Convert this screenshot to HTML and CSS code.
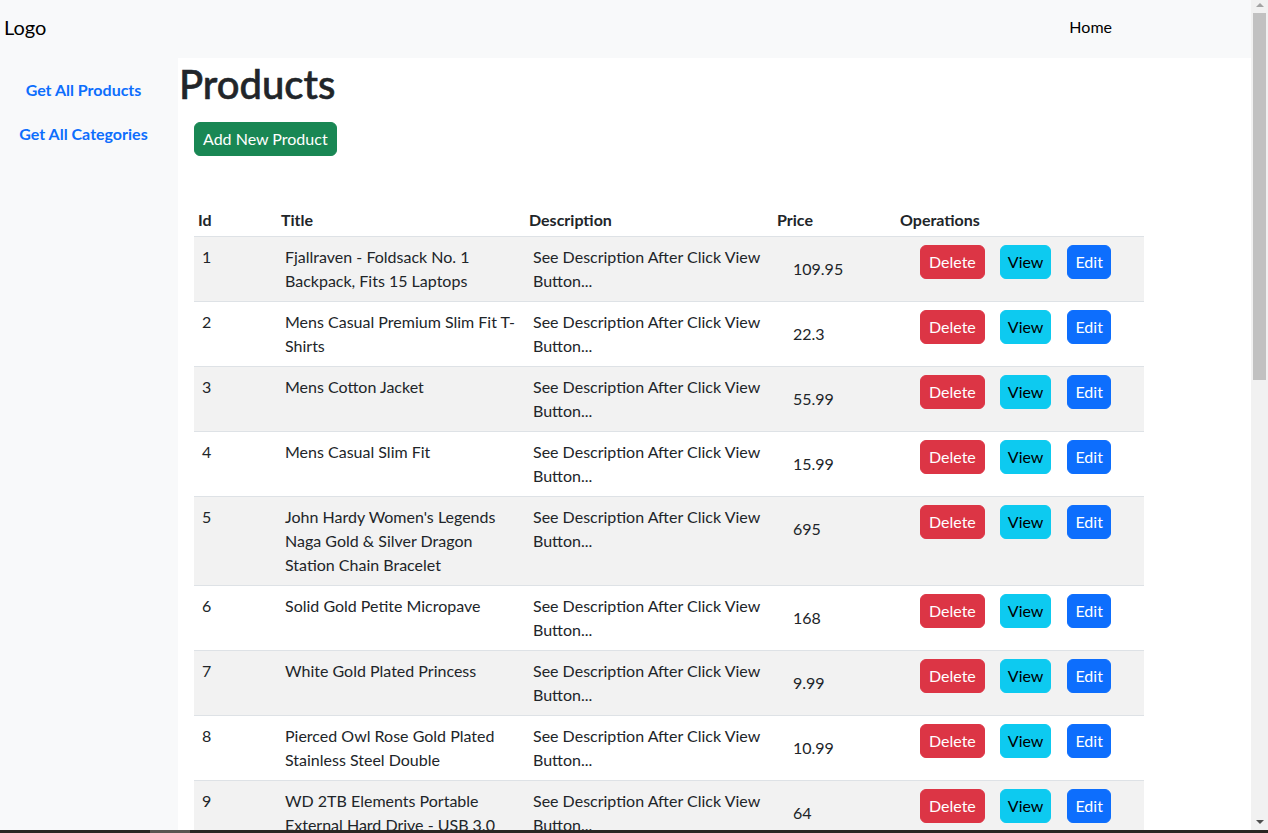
FILE: index.html
```html
<!DOCTYPE html>
<html lang="en">
<head>
<meta charset="utf-8">
<title>Products</title>
<link rel="stylesheet" href="styles.css">
</head>
<body>
<header class="navbar">
  <a class="brand" href="#">Logo</a>
  <nav class="topnav"><a href="#">Home</a></nav>
</header>
<div class="layout">
  <aside class="sidebar">
    <a href="#">Get All Products</a>
    <a href="#">Get All Categories</a>
  </aside>
  <main class="content">
    <h1 class="page-title">Products</h1>
    <div class="actions"><button class="btn btn-success">Add New Product</button></div>
    <table class="products">
      <colgroup>
        <col class="c-id"><col class="c-title"><col class="c-desc"><col class="c-price"><col class="c-ops">
      </colgroup>
      <thead>
        <tr><th>Id</th><th>Title</th><th>Description</th><th>Price</th><th>Operations</th></tr>
      </thead>
      <tbody>
        <tr><td>1</td><td>Fjallraven - Foldsack No. 1 Backpack, Fits 15 Laptops</td><td>See Description After Click View Button...</td><td class="price">109.95</td><td class="ops"><button class="btn btn-danger">Delete</button><button class="btn btn-info">View</button><button class="btn btn-primary">Edit</button></td></tr>
        <tr><td>2</td><td>Mens Casual Premium Slim Fit T-Shirts</td><td>See Description After Click View Button...</td><td class="price">22.3</td><td class="ops"><button class="btn btn-danger">Delete</button><button class="btn btn-info">View</button><button class="btn btn-primary">Edit</button></td></tr>
        <tr><td>3</td><td>Mens Cotton Jacket</td><td>See Description After Click View Button...</td><td class="price">55.99</td><td class="ops"><button class="btn btn-danger">Delete</button><button class="btn btn-info">View</button><button class="btn btn-primary">Edit</button></td></tr>
        <tr><td>4</td><td>Mens Casual Slim Fit</td><td>See Description After Click View Button...</td><td class="price">15.99</td><td class="ops"><button class="btn btn-danger">Delete</button><button class="btn btn-info">View</button><button class="btn btn-primary">Edit</button></td></tr>
        <tr><td>5</td><td>John Hardy Women's Legends Naga Gold &amp; Silver Dragon Station Chain Bracelet</td><td>See Description After Click View Button...</td><td class="price">695</td><td class="ops"><button class="btn btn-danger">Delete</button><button class="btn btn-info">View</button><button class="btn btn-primary">Edit</button></td></tr>
        <tr><td>6</td><td>Solid Gold Petite Micropave</td><td>See Description After Click View Button...</td><td class="price">168</td><td class="ops"><button class="btn btn-danger">Delete</button><button class="btn btn-info">View</button><button class="btn btn-primary">Edit</button></td></tr>
        <tr><td>7</td><td>White Gold Plated Princess</td><td>See Description After Click View Button...</td><td class="price">9.99</td><td class="ops"><button class="btn btn-danger">Delete</button><button class="btn btn-info">View</button><button class="btn btn-primary">Edit</button></td></tr>
        <tr><td>8</td><td>Pierced Owl Rose Gold Plated Stainless Steel Double</td><td>See Description After Click View Button...</td><td class="price">10.99</td><td class="ops"><button class="btn btn-danger">Delete</button><button class="btn btn-info">View</button><button class="btn btn-primary">Edit</button></td></tr>
        <tr><td>9</td><td>WD 2TB Elements Portable External Hard Drive - USB 3.0</td><td>See Description After Click View Button...</td><td class="price">64</td><td class="ops"><button class="btn btn-danger">Delete</button><button class="btn btn-info">View</button><button class="btn btn-primary">Edit</button></td></tr>
        <tr><td>10</td><td>SanDisk SSD PLUS 1TB Internal SSD - SATA III 6 Gb/s</td><td>See Description After Click View Button...</td><td class="price">109</td><td class="ops"><button class="btn btn-danger">Delete</button><button class="btn btn-info">View</button><button class="btn btn-primary">Edit</button></td></tr>
      </tbody>
    </table>
  </main>
</div>
<div class="scrollbar" aria-hidden="true">
  <span class="sb-arrow sb-up"></span>
  <span class="sb-thumb"></span>
  <span class="sb-arrow sb-down"></span>
</div>
<div class="taskbar" aria-hidden="true"><span class="tb-seg"></span></div>
</body>
</html>
```
FILE: styles.css
```css
html, body {
  margin: 0;
  padding: 0;
  overflow: hidden;
  height: 100%;
}
body {
  font-family: "Lato", "Noto Sans", "Liberation Sans", sans-serif;
  font-size: 16px;
  line-height: 1.5;
  color: #212529;
  background: #fff;
}
a { text-decoration: none; }

.navbar {
  height: 58px;
  background: #f8f9fa;
  display: flex;
  align-items: center;
  padding: 0 156px 4px 4px;
  box-sizing: border-box;
}
.brand {
  font-size: 20px;
  color: #000;
  line-height: 30px;
}
.topnav { margin-left: auto; }
.topnav a {
  color: #000;
  font-size: 16px;
  line-height: 24px;
}

.layout {
  display: flex;
  min-height: calc(100vh - 58px);
}
.sidebar {
  width: 178px;
  flex: 0 0 178px;
  background: #f8f9fa;
  box-sizing: border-box;
  padding: 10px 11px 0 0;
  display: flex;
  flex-direction: column;
  align-items: center;
}
.sidebar a {
  color: #0d6efd;
  font-weight: 700;
  padding: 10px 0;
  line-height: 24px;
}

.content {
  flex: 1;
  background: #fff;
}
.page-title {
  font-size: 40px;
  font-weight: 500;
  line-height: 48px;
  margin: 2px 0 0 1px;
  -webkit-text-stroke: 0.6px #212529;
}
.actions {
  margin: 14px 0 0 16px;
}
.btn {
  font-family: inherit;
  font-size: 16px;
  line-height: 24px;
  padding: 4px 8px;
  border: 1px solid transparent;
  border-radius: 6px;
  cursor: pointer;
}
.btn-success { background: #198754; border-color: #198754; color: #fff; }
.btn-danger { background: #dc3545; border-color: #dc3545; color: #fff; }
.btn-info { background: #0dcaf0; border-color: #0dcaf0; color: #000; padding: 4px 7px; }
.btn-primary { background: #0d6efd; border-color: #0d6efd; color: #fff; padding: 4px 7px; }

.products {
  margin: 46px 0 0 16px;
  width: 950px;
  table-layout: fixed;
  border-collapse: collapse;
}
.c-id { width: 83px; }
.c-title { width: 248px; }
.c-desc { width: 248px; }
.c-price { width: 123px; }
.c-ops { width: 248px; }

.products th {
  text-align: left;
  font-weight: 700;
  padding: 6px 4px 4px;
  border-bottom: 1px solid #dee2e6;
}
.products td {
  vertical-align: top;
  padding: 8px;
  border-bottom: 1px solid #dee2e6;
}
.products tbody tr:nth-child(odd) td { background: #f2f2f2; }
.products td.price { padding: 20px 8px 8px 20px; }
.products td.ops { padding: 8px 8px 8px 16px; white-space: nowrap; }
.ops .btn { margin: 0 8px; }
.ops .btn-info { margin-left: 7px; }

.scrollbar {
  position: fixed;
  top: 0;
  right: 0;
  width: 17px;
  bottom: 3px;
  background: #f1f1f1;
}
.sb-thumb {
  position: absolute;
  left: 2px;
  width: 13px;
  top: 13px;
  height: 367px;
  background: #c1c1c1;
}
.sb-arrow {
  position: absolute;
  left: 5px;
  width: 0;
  height: 0;
  border-left: 4px solid transparent;
  border-right: 4px solid transparent;
}
.sb-up { top: 3px; border-bottom: 4px solid #a3a3a3; }
.sb-down { bottom: 6px; border-top: 4px solid #505050; }

.taskbar {
  position: fixed;
  left: 0;
  right: 0;
  bottom: 0;
  height: 3px;
  background: #2a2522;
}
.tb-seg {
  position: absolute;
  left: 150px;
  width: 40px;
  top: 0;
  bottom: 0;
  background: #5a5550;
}
```
